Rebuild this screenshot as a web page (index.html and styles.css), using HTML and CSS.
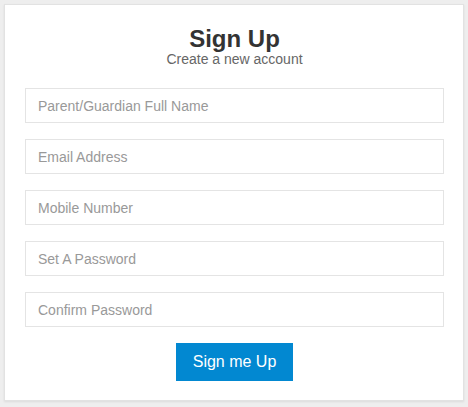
FILE: index.html
```html
<!DOCTYPE html>
<html>
<head>
<meta charset="utf-8">
<title>Sign Up</title>
<link rel="stylesheet" href="styles.css">
</head>
<body>
<div class="card">
  <h1 class="title">Sign Up</h1>
  <p class="subtitle">Create a new account</p>
  <form class="form">
    <input class="field" type="text" placeholder="Parent/Guardian Full Name">
    <input class="field" type="email" placeholder="Email Address">
    <input class="field" type="tel" placeholder="Mobile Number">
    <input class="field" type="password" placeholder="Set A Password">
    <input class="field" type="password" placeholder="Confirm Password">
    <div class="actions">
      <button class="btn" type="button">Sign me Up</button>
    </div>
  </form>
</div>
</body>
</html>
```
FILE: styles.css
```css
* { box-sizing: border-box; }
html, body { margin: 0; padding: 0; }
body {
  background: #eeeeee;
  font-family: "Liberation Sans", Arial, sans-serif;
  padding: 4px 4px 0 4px;
  height: 407px;
}
.card {
  width: 460px;
  background: #ffffff;
  border: 1px solid #e2e2e2;
  box-shadow: 0 1px 2px rgba(0,0,0,0.08);
  padding: 22px 19px 19px 20px;
}
.title {
  margin: 0;
  text-align: center;
  font-size: 24px;
  line-height: 24px;
  font-weight: bold;
  color: #333333;
}
.subtitle {
  margin: 0;
  text-align: center;
  font-size: 14px;
  line-height: 16px;
  color: #666666;
}
.form {
  margin-top: 21px;
  display: flex;
  flex-direction: column;
  gap: 16px;
}
.field {
  display: block;
  width: 100%;
  height: 35px;
  border: 1px solid #e4e4e4;
  padding: 0 12px;
  font-family: "Liberation Sans", Arial, sans-serif;
  font-size: 14px;
  color: #333;
  background: #fff;
  outline: none;
  margin: 0;
}
.field::placeholder { color: #999999; }
.actions {
  display: flex;
  justify-content: center;
}
.btn {
  height: 38px;
  padding: 0 17px;
  border: none;
  background: #0288d1;
  color: #ffffff;
  font-family: "Liberation Sans", Arial, sans-serif;
  font-size: 16px;
  cursor: pointer;
}
```
